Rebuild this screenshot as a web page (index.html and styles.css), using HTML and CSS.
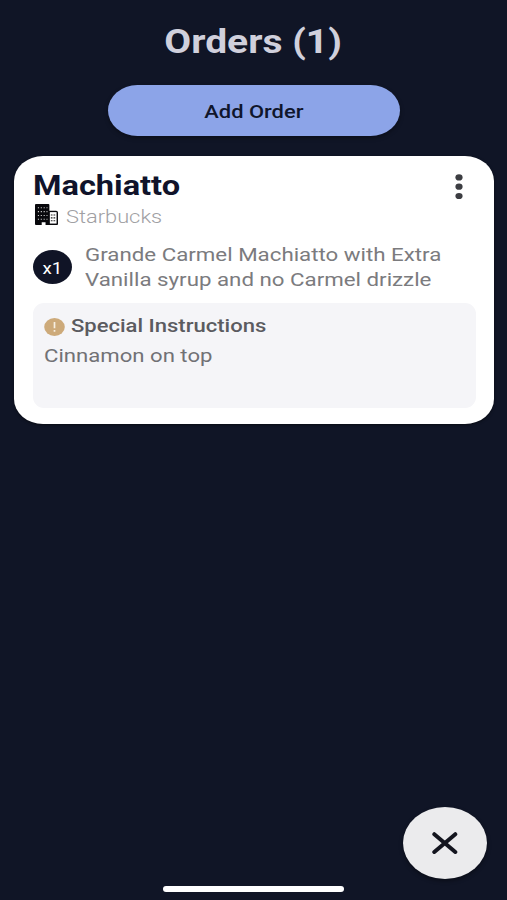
FILE: index.html
```html
<!DOCTYPE html>
<html lang="en">
<head>
<meta charset="utf-8">
<title>Orders</title>
<link rel="stylesheet" href="styles.css">
</head>
<body>
<main class="screen">
  <h1 class="title"><span class="wide">Orders (1)</span></h1>
  <button class="add"><span class="wide">Add Order</span></button>
  <article class="card">
    <header class="head">
      <div>
        <h2 class="name"><span class="wide">Machiatto</span></h2>
        <div class="shop">
          <svg class="building" viewBox="0 0 24 22" preserveAspectRatio="none">
            <path d="M1 0h13q1 0 1 1v6h7q2 0 2 2v12q0 1-1 1H11v-3H7v3H1q-1 0-1-1V1q0-1 1-1z" fill="#08080c"/>
            <path d="M15.5 8.5h7v12h-7z" fill="#fff"/>
            <path d="M3 4h10M3 8h10M3 12h10M3 16h10" stroke="#ccc" stroke-width="1.1" stroke-dasharray="1.2 1.8"/>
            <path d="M16.5 11.5h5M16.5 14.5h5M16.5 17.5h5" stroke="#222" stroke-width="1.2" stroke-dasharray="1.8 1"/>
          </svg>
          <span class="wide">Starbucks</span>
        </div>
      </div>
      <svg class="more" viewBox="0 0 8 26"><g fill="#3c3d42"><ellipse cx="4" cy="3.4" rx="3.6" ry="3.1"/><ellipse cx="4" cy="12.7" rx="3.6" ry="3.1"/><ellipse cx="4" cy="22" rx="3.6" ry="3.1"/></g></svg>
    </header>
    <div class="item">
      <span class="qty"><span class="wide">x1</span></span>
      <p class="desc"><span class="wide">Grande Carmel Machiatto with Extra<br>Vanilla syrup and no Carmel drizzle</span></p>
    </div>
    <section class="notes">
      <h3 class="notes-title">
        <svg class="alert" viewBox="0 0 21 18"><ellipse cx="10.5" cy="9" rx="10.3" ry="9" fill="#cdaa7a"/><path d="M10.5 4v6.2M10.5 12v1.8" stroke="#f7efe2" stroke-width="1.7"/></svg>
        <span class="wide">Special Instructions</span>
      </h3>
      <p class="note"><span class="wide">Cinnamon on top</span></p>
    </section>
  </article>
  <div class="fab-row">
    <button class="fab" aria-label="Close">
      <svg class="cross" viewBox="0 0 26 22"><path d="M2.3 2.2L23.3 20M23.3 2.2L2.3 20" stroke="#14151f" stroke-width="4" stroke-linecap="round"/></svg>
    </button>
  </div>
  <div class="home"></div>
</main>
</body>
</html>
```
FILE: styles.css
```css
* { box-sizing: border-box; margin: 0; }
body { background: #101526; font-family: Roboto, sans-serif; }
svg { display: block; flex: none; }
.screen { width: 507px; height: 900px; display: flex; flex-direction: column; align-items: center; overflow: hidden; }
.wide { display: inline-block; white-space: nowrap; transform: scaleX(1.173); }
.title { margin-top: 22px; height: 40px; line-height: 40px; font-size: 33px; font-weight: 700; color: #d0d0dc; }
.title .wide { transform: scaleX(1.182); }
.add { margin-top: 23px; width: 292px; height: 51px; flex: none; border: 0; border-radius: 30px / 26px; background: #8ca4e8; color: #10162c; font: 500 18.5px/51px Roboto, sans-serif; padding: 2px 0 0; box-shadow: 0 2px 4px rgba(0, 0, 0, .35); }
.add .wide { transform: scaleX(1.185); }
.card { margin-top: 20px; width: 480px; height: 268px; flex: none; border-radius: 29px / 25px; background: #fff; padding: 14px 19px 0 19px; box-shadow: 0 1px 3px rgba(0, 0, 0, .5); }
.card .wide { transform-origin: left; }
.head { display: flex; justify-content: space-between; }
.name { height: 32px; line-height: 32px; font-size: 27px; font-weight: 700; color: #10132a; }
.name .wide { transform: scaleX(1.205); }
.shop { display: flex; gap: 8px; height: 28px; line-height: 29px; font-size: 18.5px; font-weight: 300; color: #a0a0a3; }
.shop .wide { position: relative; top: 1px; transform: scaleX(1.18); }
.building { width: 23px; height: 21px; margin: 2px 0 0 2px; }
.more { width: 8px; height: 26px; margin: 4px 12px 0 0; }
.item { display: flex; gap: 13px; height: 73px; align-items: center; }
.qty { width: 39px; height: 34px; border-radius: 50%; background: #101426; color: #fff; font-size: 16px; line-height: 37px; text-align: center; }
.qty .wide { transform-origin: center; }
.desc { font-size: 19px; line-height: 25px; color: #7b7b7e; }
.notes { width: 443px; height: 105px; border-radius: 11px; background: #f5f5f8; padding: 9px 11px; }
.notes-title { display: flex; align-items: center; gap: 6px; height: 29px; line-height: 31px; font-size: 18.5px; font-weight: 500; color: #5b5b60; }
.notes-title .wide { transform: scaleX(1.19); }
.alert { width: 21px; height: 18px; }
.note { height: 28px; line-height: 30px; font-size: 19px; color: #717175; }
.note .wide { transform: scaleX(1.165); }
.fab-row { width: 507px; margin-top: auto; padding-right: 20px; display: flex; justify-content: flex-end; }
.fab { width: 84px; height: 72px; border: 0; border-radius: 50%; background: #ebebed; padding: 0; display: flex; align-items: center; justify-content: center; box-shadow: 0 2px 4px rgba(0, 0, 0, .4); }
.cross { width: 26px; height: 22px; }
.home { flex: none; width: 181px; height: 6px; margin: 7px 0 8px; border-radius: 3px; background: #fff; }
```
